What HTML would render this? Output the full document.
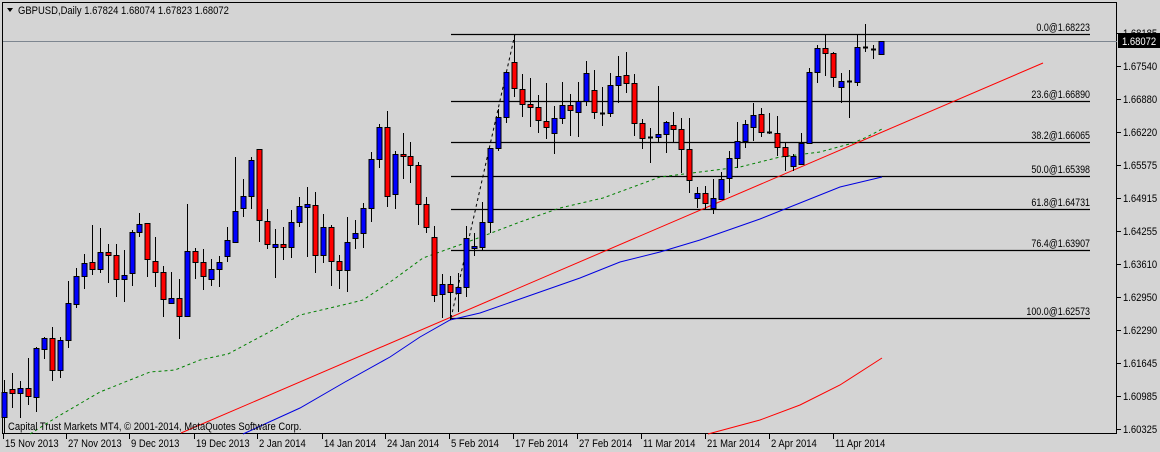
<!DOCTYPE html>
<html><head><meta charset="utf-8"><style>
body{margin:0;background:#d4d4d4;width:1160px;height:452px;overflow:hidden}
svg{display:block}
text{font-family:"Liberation Sans",sans-serif;font-size:11px;fill:#000}
</style></head><body>
<svg id="s" width="1160" height="452" xmlns="http://www.w3.org/2000/svg">
<rect x="0" y="0" width="1160" height="452" fill="#d4d4d4"/>
<rect x="2.5" y="2.5" width="1114" height="431" fill="none" stroke="#000"/>
<line x1="3" y1="41.5" x2="1117" y2="41.5" stroke="#7d8690"/>
<polygon points="7,8 13,8 10,12" fill="#000"/>
<text x="18" y="14">GBPUSD,Daily  1.67824 1.68074 1.67823 1.68072</text>
<g id="fib" stroke="#000" stroke-width="1.2"></g>
<polyline fill="none" stroke="#008000" stroke-dasharray="3,3" points="30,434 57,417 100,392 150,372 175,370 200,360 228,354 273,330 300,315 347,304 363,300 393,280 423,258 465,243 520,222 560,208 603,198 660,177 700,172 740,167 780,157 820,152 853,143 867,137 882,129"/>
<polyline fill="none" stroke="#0000e0" points="243,434 300,408 345,382 390,357 420,337 450,320 480,313 520,299 580,278 620,262 660,252 700,240 760,219 800,203 840,187 882,177"/>
<polyline fill="none" stroke="#f00" points="708,434 760,420 800,405 840,385 882,358"/>
<line x1="181" y1="433" x2="1043" y2="63" stroke="#f00"/>
<line x1="451" y1="318" x2="515" y2="34" stroke="#000" stroke-dasharray="3,3"/>
<g id="c"></g>
<text x="8" y="430">Capital Trust Markets MT4, © 2001-2014, MetaQuotes Software Corp.</text>
<g id="ax"></g>
<rect x="1118" y="33" width="42" height="15" fill="#000"/>
<text x="1122" y="45" style="fill:#fff">1.68072</text>
</svg>
<script>
var NS="http://www.w3.org/2000/svg";
function el(p,t,a,tx){var e=document.createElementNS(NS,t);for(var k in a)e.setAttribute(k,a[k]);if(tx)e.textContent=tx;p.appendChild(e);return e;}
var s=document.getElementById('s');
var D=[[392,417,380,434,'b'],[389,393,373,408,'r'],[388,393,381,418,'b'],[388,396,358,405,'r'],[348,397,347,412,'b'],[338,349,337,359,'b'],[338,370,327,381,'r'],[340,370,337,378,'b'],[303,340,281,348,'b'],[276,304,268,308,'b'],[263,276,254,289,'b'],[262,269,225,275,'r'],[252,269,228,273,'b'],[252,255,244,283,'r'],[255,279,244,297,'r'],[275,279,250,302,'b'],[232,273,230,286,'b'],[224,232,213,237,'b'],[223,259,223,277,'r'],[261,272,237,287,'r'],[272,299,266,317,'r'],[298,303,272,304,'b'],[298,316,279,339,'r'],[251,316,204,317,'b'],[251,262,248,279,'r'],[262,276,249,290,'r'],[269,279,259,286,'b'],[262,269,256,287,'b'],[240,256,227,262,'b'],[211,242,157,243,'b'],[196,208,179,217,'b'],[160,196,157,209,'b'],[149,220,149,242,'r'],[221,244,209,249,'r'],[244,247,229,278,'b'],[244,247,227,260,'r'],[222,247,210,258,'b'],[206,222,197,227,'b'],[204,207,187,257,'b'],[205,255,192,273,'r'],[227,255,214,263,'b'],[227,261,225,286,'r'],[261,270,255,289,'r'],[242,270,217,292,'b'],[233,238,220,249,'b'],[208,233,203,248,'b'],[159,208,152,222,'b'],[127,159,124,168,'b'],[127,196,111,207,'r'],[154,194,151,209,'b'],[154,156,133,179,'r'],[156,165,142,183,'r'],[165,204,162,225,'r'],[204,227,197,233,'r'],[237,295,226,302,'r'],[284,294,274,318,'b'],[284,292,276,320,'r'],[287,293,273,312,'b'],[238,287,226,297,'b'],[246,248,233,256,'b'],[222,247,202,250,'b'],[148,222,148,233,'b'],[117,148,109,151,'b'],[72,117,72,123,'b'],[62,88,34,97,'r'],[89,104,74,117,'r'],[104,107,78,127,'r'],[107,120,95,133,'r'],[121,127,83,139,'r'],[118,133,106,154,'b'],[105,118,82,124,'b'],[105,110,94,136,'r'],[101,112,82,137,'b'],[73,101,61,106,'b'],[90,112,70,119,'r'],[113,113,87,126,'x'],[85,113,73,117,'b'],[76,85,56,103,'b'],[75,83,52,93,'r'],[83,123,74,136,'r'],[123,138,119,149,'r'],[137,138,128,163,'x'],[134,137,86,142,'b'],[122,134,121,153,'b'],[125,129,112,143,'r'],[129,149,118,173,'r'],[149,180,118,193,'r'],[193,198,187,208,'b'],[193,203,186,209,'r'],[198,208,179,214,'b'],[179,199,172,200,'b'],[158,178,151,193,'b'],[141,158,122,168,'b'],[124,141,120,148,'b'],[115,127,103,141,'b'],[114,132,108,137,'r'],[132,133,113,134,'x'],[133,147,116,156,'r'],[147,156,143,171,'r'],[156,166,154,171,'b'],[143,164,133,165,'b'],[72,143,68,144,'b'],[48,72,45,83,'b'],[48,53,34,76,'r'],[53,77,52,87,'r'],[81,87,73,103,'b'],[81,82,70,118,'x'],[47,82,34,86,'b'],[47,49,24,52,'x'],[49,50,45,59,'x'],[41,54,41,54,'b']];
var g=document.getElementById('c');
D.forEach(function(d,i){var x=Math.round(4+7.97*i);
el(g,'line',{x1:x+.5,x2:x+.5,y1:d[2],y2:Math.min(d[3],433),stroke:'#000'});
if(d[4]=='x'||d[1]-d[0]<2){el(g,'line',{x1:x-2,x2:x+3,y1:d[0]+.5,y2:d[0]+.5,stroke:'#000','stroke-width':2});}
else el(g,'rect',{x:x-2,y:d[0]+.5,width:5,height:Math.min(d[1],433)-d[0],fill:d[4]=='b'?'#0000ff':'#ff0000',stroke:'#000'});});
var f=document.getElementById('fib');
[[34,'0.0@1.68223'],[101,'23.6@1.66890'],[142,'38.2@1.66065'],[176,'50.0@1.65398'],[209,'61.8@1.64731'],[250,'76.4@1.63907'],[318,'100.0@1.62573']].forEach(function(l){
el(f,'line',{x1:451,x2:1090,y1:l[0]+.5,y2:l[0]+.5});el(s,'text',{x:1090,y:l[0]-3,'text-anchor':'end','class':'fl'},l[1]);});
var a=document.getElementById('ax');
['1.68185','1.67540','1.66880','1.66220','1.65575','1.64915','1.64255','1.63610','1.62950','1.62290','1.61645','1.60985','1.60325'].forEach(function(t,i){var y=33+i*33;
el(a,'line',{x1:1117,x2:1121,y1:y+.5,y2:y+.5,stroke:'#000'});el(a,'text',{x:1123,y:y+4},t);});
[['15 Nov 2013',4],['27 Nov 2013',67],['9 Dec 2013',130],['19 Dec 2013',195],['2 Jan 2014',258],['14 Jan 2014',323],['24 Jan 2014',386],['5 Feb 2014',450],['17 Feb 2014',514],['27 Feb 2014',578],['11 Mar 2014',642],['21 Mar 2014',706],['2 Apr 2014',770],['11 Apr 2014',834]].forEach(function(d){
el(a,'line',{x1:d[1]-.5,x2:d[1]-.5,y1:434,y2:439,stroke:'#000'});el(a,'text',{x:d[1]+1,y:447},d[0]);});
document.querySelectorAll('text').forEach(function(t){var w=t.getComputedTextLength();var k=t.getAttribute('class')=='fl'?0.81:0.86;
t.setAttribute('textLength',(w*k).toFixed(1));t.setAttribute('lengthAdjust','spacingAndGlyphs');});
</script>
</body></html>
